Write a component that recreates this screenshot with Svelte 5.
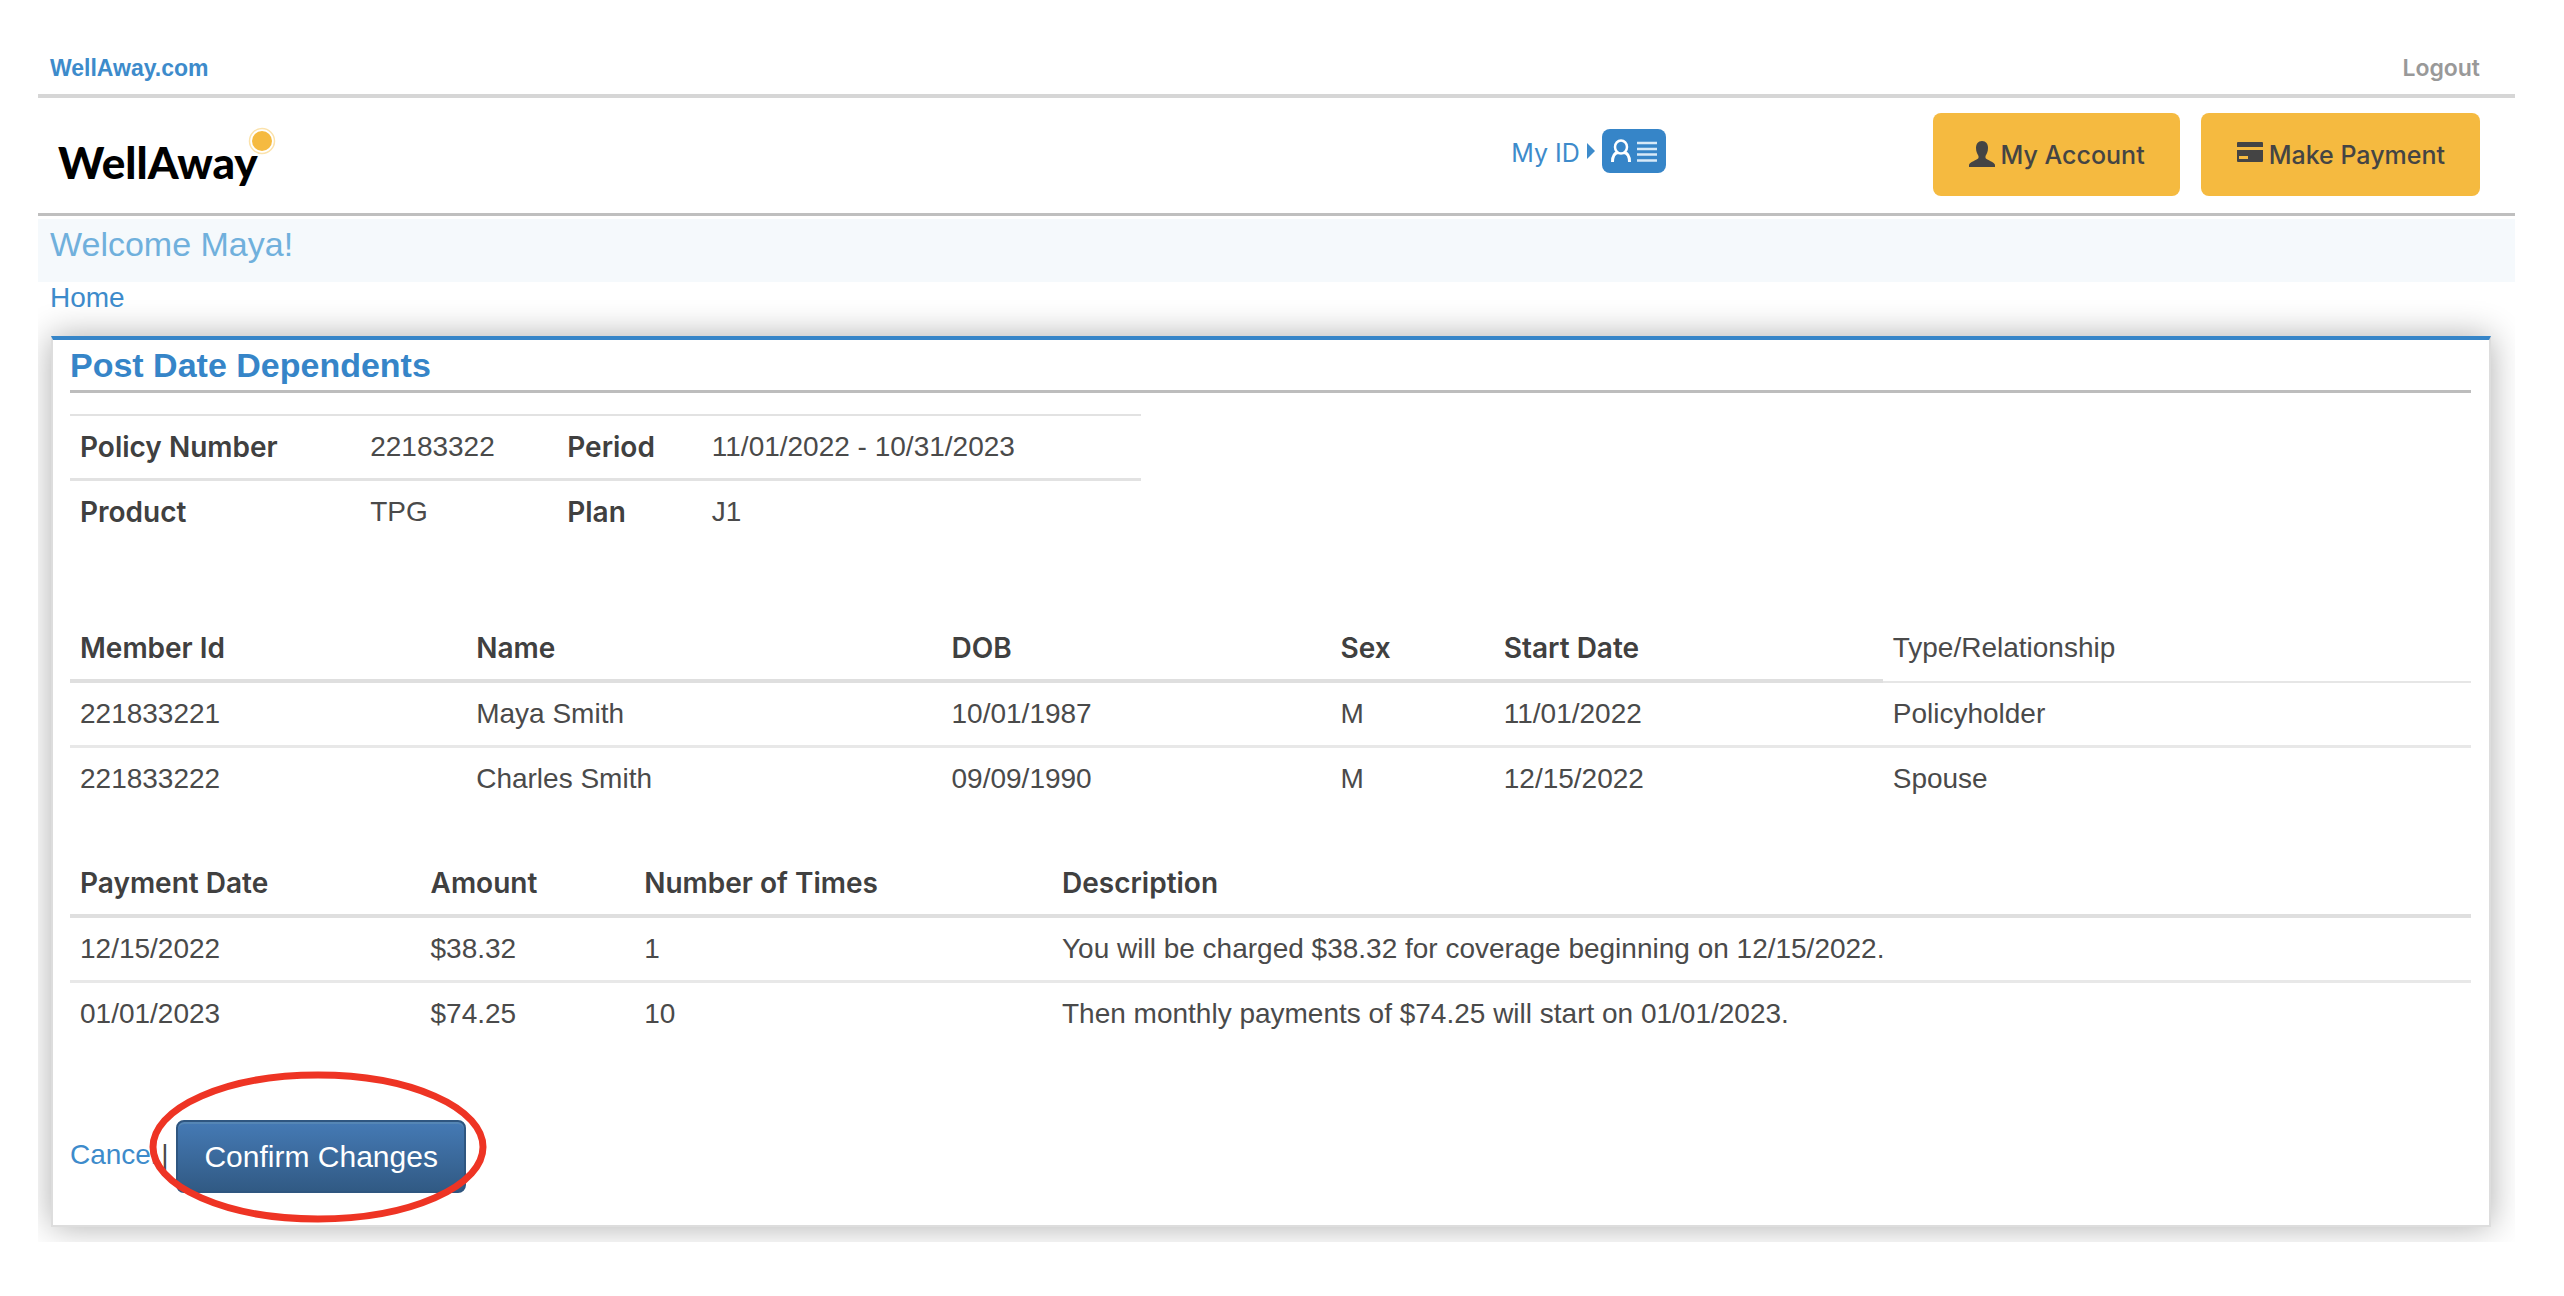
<script>
  const policy = [
    [
      { label: 'Policy Number', value: '22183322' },
      { label: 'Period', value: '11/01/2022 - 10/31/2023' },
    ],
    [
      { label: 'Product', value: 'TPG' },
      { label: 'Plan', value: 'J1' },
    ],
  ];
  const policyCols = [27.1, 18.4, 13.5, 41];

  const memberCols = [
    { label: 'Member Id', key: 'id', width: 16.5 },
    { label: 'Name', key: 'name', width: 19.8 },
    { label: 'DOB', key: 'dob', width: 16.2 },
    { label: 'Sex', key: 'sex', width: 6.8 },
    { label: 'Start Date', key: 'start', width: 16.2 },
    { label: 'Type/Relationship', key: 'type', width: 24.5, plain: true },
  ];
  const members = [
    { id: '221833221', name: 'Maya Smith', dob: '10/01/1987', sex: 'M', start: '11/01/2022', type: 'Policyholder' },
    { id: '221833222', name: 'Charles Smith', dob: '09/09/1990', sex: 'M', start: '12/15/2022', type: 'Spouse' },
  ];

  const paymentCols = [
    { label: 'Payment Date', key: 'date', width: 14.6 },
    { label: 'Amount', key: 'amount', width: 8.9 },
    { label: 'Number of Times', key: 'times', width: 17.4 },
    { label: 'Description', key: 'description', width: 59.1 },
  ];
  const payments = [
    {
      date: '12/15/2022',
      amount: '$38.32',
      times: 1,
      description: 'You will be charged $38.32 for coverage beginning on 12/15/2022.',
    },
    {
      date: '01/01/2023',
      amount: '$74.25',
      times: 10,
      description: 'Then monthly payments of $74.25 will start on 01/01/2023.',
    },
  ];
</script>

{#snippet grid(cols, rows)}
  <table class="grid">
    <colgroup>
      {#each cols as col}
        <col style="width: {col.width}%" />
      {/each}
    </colgroup>
    <thead>
      <tr>
        {#each cols as col}
          <th scope="col" class:plain={col.plain}>{col.label}</th>
        {/each}
      </tr>
    </thead>
    <tbody>
      {#each rows as row}
        <tr>
          {#each cols as col}
            <td>{row[col.key]}</td>
          {/each}
        </tr>
      {/each}
    </tbody>
  </table>
{/snippet}

<div class="page">
  <nav class="topbar">
    <a class="site" href="#site">WellAway.com</a>
    <a class="logout" href="#logout">Logout</a>
  </nav>

  <header>
    <a class="logo" href="#home">
      WellAway
      <svg class="sun" viewBox="0 0 28 28" aria-hidden="true">
        <circle cx="14" cy="14" r="12.5" fill="none" stroke="#fbe2ab" stroke-width="1.5" />
        <circle cx="14" cy="14" r="10" fill="#f5ba40" />
      </svg>
    </a>

    <div class="actions">
      <a class="my-id" href="#id">
        <span>My ID</span>
        <svg class="caret" viewBox="0 0 8 16" aria-hidden="true"><path d="M0 0 8 8 0 16Z" fill="currentColor" /></svg>
        <svg class="id-card" viewBox="0 0 64 44" aria-hidden="true">
          <rect width="64" height="44" rx="8" fill="#3685c8" />
          <g fill="none" stroke="#fff" stroke-width="2.5">
            <ellipse cx="19" cy="18" rx="6" ry="6.5" />
            <path d="M10.5 33c0-6 2.500-9 5.500-9.500M27.500 33c0-6-2.500-9-5.500-9.500" stroke-width="3" />
            <path d="M35 14h20M35 20h20M35 25.500h20M35 31.500h20" stroke="#d7e9f7" />
          </g>
        </svg>
      </a>
      <div class="buttons">
        <button type="button">
          <svg viewBox="0 0 28 28" aria-hidden="true">
            <path
              d="M14 0c4 0 6 3 6 7 0 4-1.500 6-2.500 8v2c1 2 9.500 4 9.500 7v2H1v-2c0-3 8.500-5 9.500-7v-2C9.500 13 8 11 8 7c0-4 2-7 6-7Z"
              fill="currentColor"
            />
          </svg>
          My Account
        </button>
        <button type="button">
          <svg viewBox="0 0 28 28" aria-hidden="true">
            <path
              d="M2 1h24q1 0 1 1v4H1V2q0-1 1-1ZM1 9h26v11q0 1-1 1H2q-1 0-1-1ZM3 15v3h9v-3Z"
              fill="currentColor"
              fill-rule="evenodd"
            />
          </svg>
          Make Payment
        </button>
      </div>
    </div>
  </header>

  <div class="welcome">Welcome Maya!</div>
  <div class="crumbs"><a href="#home">Home</a></div>

  <main>
    <h1>Post Date Dependents</h1>

    <table class="policy">
      <colgroup>
        {#each policyCols as width}
          <col style="width: {width}%" />
        {/each}
      </colgroup>
      <tbody>
        {#each policy as row}
          <tr>
            {#each row as item}
              <th scope="row">{item.label}</th>
              <td>{item.value}</td>
            {/each}
          </tr>
        {/each}
      </tbody>
    </table>

    {@render grid(memberCols, members)}
    {@render grid(paymentCols, payments)}

    <div class="footer">
      <a href="#cancel">Cancel</a>
      <span class="divider">|</span>
      <div class="confirm">
        <button type="submit">Confirm Changes</button>
        <svg class="ring" viewBox="0 0 338 152" aria-hidden="true">
          <ellipse cx="169" cy="76" rx="165" ry="72" fill="none" stroke="#ee3424" stroke-width="7" />
        </svg>
      </div>
    </div>
  </main>
</div>

<style>
  :global(body) {
    margin: 0;
    background: #fff;
  }

  .page {
    margin: 0 49px 0 38px;
    padding-bottom: 15px;
    overflow: hidden;
    font-family: 'Liberation Sans', Arial, sans-serif;
    font-size: 28px;
    line-height: 32px;
    color: #4a4a4a;
  }

  a {
    color: #3d8bcb;
    text-decoration: none;
  }

  button {
    border: 0;
    cursor: pointer;
  }

  .topbar {
    display: flex;
    justify-content: space-between;
    padding: 52px 35px 10px 12px;
    border-bottom: 4px solid #d6d6d6;
    font-size: 23px;
    font-weight: 700;
  }

  .logout {
    font-family: Inter, sans-serif;
    font-weight: 600;
    color: #999;
  }

  header {
    display: flex;
    justify-content: space-between;
    padding: 15px 35px 17px 20px;
    border-bottom: 3px solid #bfbfbf;
    font-family: Inter, sans-serif;
  }

  .logo {
    position: relative;
    align-self: center;
    padding-top: 14px;
    font-family: Lato, sans-serif;
    font-size: 44px;
    font-weight: 900;
    line-height: 48px;
    color: #000;
  }

  .sun {
    position: absolute;
    top: 3px;
    right: -18px;
    width: 28px;
    height: 28px;
  }

  .actions {
    display: flex;
    width: 40%;
    justify-content: space-between;
  }

  .my-id {
    display: flex;
    align-items: center;
    align-self: flex-start;
    gap: 7px;
    padding-top: 16px;
    font-size: 25px;
  }

  .my-id span {
    padding-top: 3px;
  }

  .caret {
    width: 8px;
    height: 16px;
  }

  .id-card {
    width: 64px;
    height: 44px;
  }

  .buttons {
    display: flex;
    gap: 21px;
  }

  .buttons button {
    display: flex;
    align-items: center;
    gap: 5px;
    height: 83px;
    padding: 0 35px;
    border-radius: 8px;
    background: #f5ba40;
    color: #444;
    font-family: Inter, sans-serif;
    font-size: 25px;
    font-weight: 500;
  }

  .buttons svg {
    width: 28px;
    height: 28px;
  }

  .welcome {
    margin-top: 3px;
    padding: 5px 12px 18px;
    background: #f5f9fc;
    font-size: 34px;
    line-height: 40px;
    color: #70b0dc;
  }

  .crumbs {
    padding: 0 12px;
  }

  main {
    margin: 22px 24px 0 13px;
    padding: 5px 18px 32px 17px;
    border: 2px solid #ddd;
    border-top: 4px solid #3685c8;
    box-shadow: 0 0 32px rgba(0, 0, 0, 0.32);
  }

  h1 {
    margin: 0 0 21px;
    padding-bottom: 5px;
    border-bottom: 3px solid #bdbdbd;
    font-size: 34px;
    font-weight: 700;
    line-height: 40px;
    color: #3685c8;
  }

  table {
    border-collapse: separate;
    border-spacing: 0;
    table-layout: fixed;
  }

  th,
  td {
    padding: 15px 10px;
    text-align: left;
    vertical-align: top;
  }

  th {
    font-family: Inter, sans-serif;
    font-weight: 600;
    color: #404040;
  }

  .policy {
    width: 44.6%;
    margin-bottom: 74px;
  }

  .policy th,
  .policy td {
    border-top: 2px solid #e2e2e2;
  }

  .policy tr + tr th,
  .policy tr + tr td {
    border-top-width: 3px;
  }

  .grid {
    width: 100%;
  }

  .grid + .grid {
    margin-top: 42px;
  }

  .grid th {
    border-bottom: 4px solid #dfdfdf;
  }

  .grid th.plain {
    border-bottom: 2px solid #e6e6e6;
    font-family: inherit;
    font-weight: 400;
    color: #4a4a4a;
  }

  .grid tr + tr td {
    border-top: 3px solid #e8e8e8;
  }

  .footer {
    display: flex;
    align-items: center;
    margin-top: 75px;
  }

  .footer > a,
  .divider {
    padding-bottom: 3px;
  }

  .divider {
    margin: 0 8px 0 4px;
  }

  .confirm {
    position: relative;
  }

  .confirm button {
    height: 73px;
    padding: 0 26px;
    border: 2px solid #2f5680;
    border-radius: 8px;
    background: linear-gradient(#457ab5, #315a84);
    box-shadow: inset 0 2px 0 #5586b5;
    color: #fff;
    font-family: inherit;
    font-size: 30px;
  }

  /* highlight around the confirm button */
  .ring {
    position: absolute;
    top: -49px;
    left: -27px;
    width: 338px;
    height: 152px;
    pointer-events: none;
  }
</style>
